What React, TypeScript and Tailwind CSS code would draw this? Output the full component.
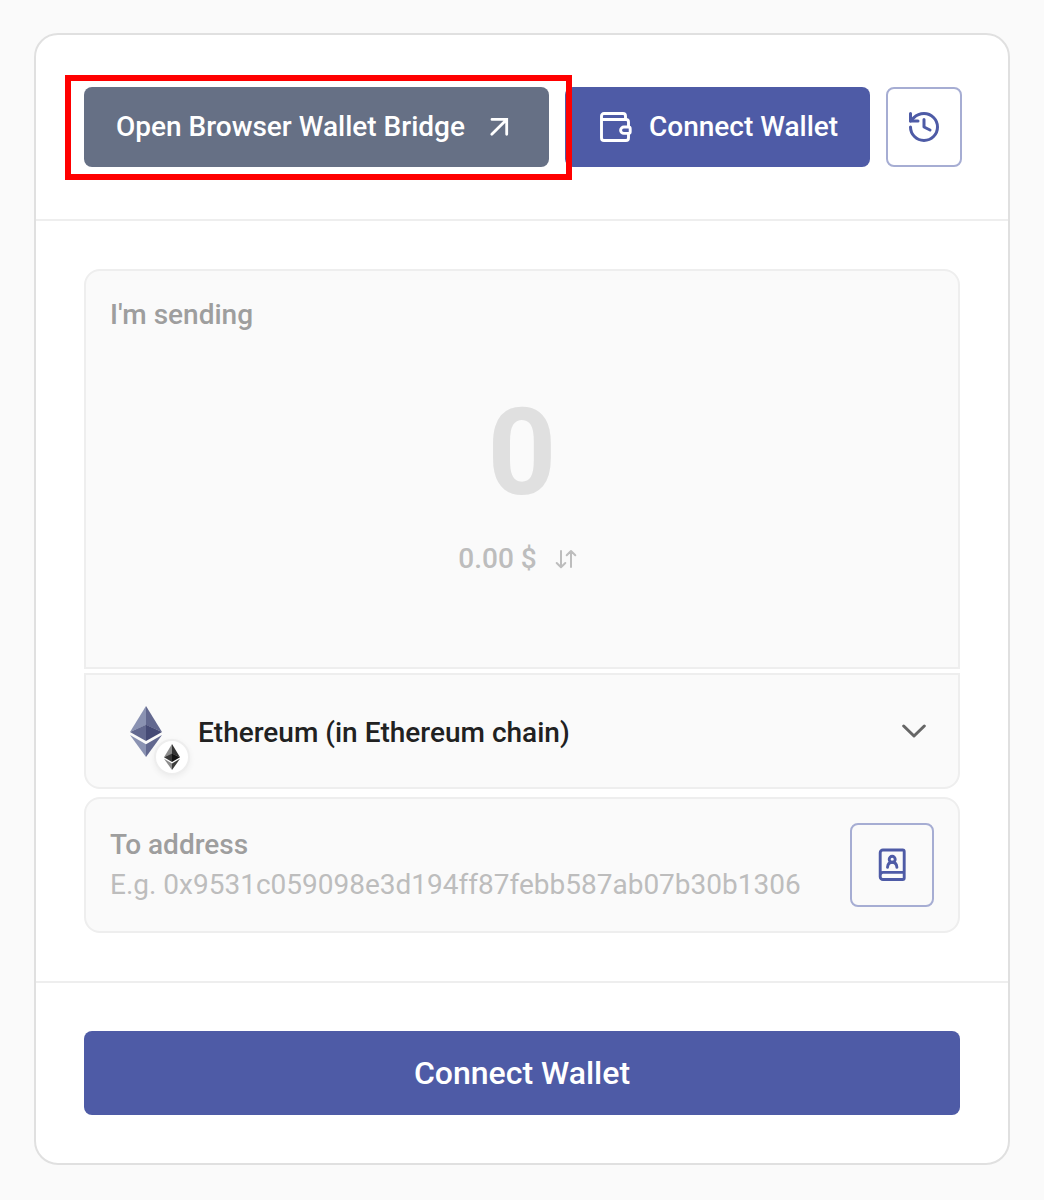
type EthColors = [string, string, string, string, string, string];

function EthLogo({ className, colors }: { className: string; colors: EthColors }) {
  const [topLeft, topRight, midLeft, midRight, lowLeft, lowRight] = colors;
  return (
    <svg className={className} viewBox="0 0 62 101" preserveAspectRatio="none">
      <path d="M31 0 0 51.5 31 37.5z" fill={topLeft} />
      <path d="M31 0 62 51.5 31 37.5z" fill={topRight} />
      <path d="M31 37.3 0 51.5 31 69.5z" fill={midLeft} />
      <path d="M31 37.3 62 51.5 31 69.5z" fill={midRight} />
      <path d="M0 57.5 31 75.8V101z" fill={lowLeft} />
      <path d="M62 57.5 31 75.8V101z" fill={lowRight} />
    </svg>
  );
}

const stroke = {
  fill: "none",
  stroke: "currentColor",
  strokeLinecap: "round",
  strokeLinejoin: "round",
} as const;

function ArrowIcon() {
  return (
    <svg className="ml-6 h-5 w-5 shrink-0" viewBox="0 0 20 20" {...stroke} strokeWidth="2.8" strokeLinejoin="miter">
      <path d="M3 2.400H17.700V17.300M17.700 2.400 2.800 17.300" />
    </svg>
  );
}

function WalletIcon() {
  return (
    <svg className="h-8 w-9 shrink-0" viewBox="0 0 36 32" {...stroke} strokeWidth="2.9">
      <path d="M26.500 8.500V5a2.500 2.500 0 0 0-2.500-2.500H5a2.500 2.500 0 0 0-2.500 2.500V27a2.500 2.500 0 0 0 2.500 2.500h22a2.500 2.500 0 0 0 2.500-2.500V22.500M2.500 8.500h24.500a2.500 2.500 0 0 1 2.500 2.500v4.500" />
      <path d="M24.800 16h4.700c1 0 1.700.7 1.700 1.700v3c0 1-.7 1.700-1.700 1.700h-4.700c-1.600 0-3.200-1.600-3.200-3.200s1.600-3.200 3.200-3.200z" />
    </svg>
  );
}

function HistoryIcon() {
  return (
    <svg className="h-9 w-9" viewBox="0 0 24 24" {...stroke} strokeWidth="2">
      <path d="M3 12a9 9 0 1 0 9-9 9.750 9.750 0 0 0-6.740 2.740L3 8" />
      <path d="M3 3v5h5M12 7v5l4 2" />
    </svg>
  );
}

function SwapIcon() {
  return (
    <svg className="ml-[18px] h-5 w-[22px]" viewBox="0 0 22 20" {...stroke} strokeWidth="2">
      <path d="M6 2v16M1.700 14 6 18.200 10.300 14M16 18V2M11.700 6.200 16 2 20.300 6.200" />
    </svg>
  );
}

function AddressBookIcon() {
  return (
    <svg className="h-9 w-7" viewBox="0 0 28 36" {...stroke} strokeWidth="2.9">
      <path d="M26.200 4.500a1.500 1.500 0 0 0-1.500-1.500H5a2.800 2.800 0 0 0-2.800 2.800V29.700a2.800 2.800 0 0 0 2.800 2.800H24.700a1.500 1.500 0 0 0 1.500-1.500zM2.200 28.600c0-2 1-3.200 2.800-3.200h21.200" />
      <circle cx="14.200" cy="12.300" r="3" />
      <path d="M9.500 20.300c.3-3 2-5 4.700-5s4.400 2 4.700 5" />
    </svg>
  );
}

export default function App() {
  return (
    <div className="h-[1200px] w-[1044px] bg-[#fafafa] pt-[33px] pl-[34px] font-['Roboto',sans-serif] text-[28px] leading-10 font-medium">
      <main className="h-[1132px] w-[976px] rounded-3xl border-2 border-[#e0e0e0] bg-white">
        <header className="relative flex h-[186px] items-center gap-4 border-b-2 border-[#eee] pl-12">
          <button className="flex h-20 w-[465px] items-center rounded-lg bg-[#667085] pl-8 whitespace-nowrap text-white">
            <span>Open Browser Wallet Bridge</span>
            <ArrowIcon />
          </button>
          <button className="flex h-20 w-[305px] items-center rounded-lg bg-[#4e5ba6] pl-[34px] whitespace-nowrap text-white">
            <WalletIcon />
            <span className="ml-[14px]">Connect Wallet</span>
          </button>
          <button className="flex h-20 w-[76px] items-center justify-center rounded-lg border-2 border-[#a6add3] text-[#4e5ba6]">
            <HistoryIcon />
          </button>
          <div className="pointer-events-none absolute top-10 left-[29px] h-[105px] w-[507px] border-6 border-[#ff0000]" />
        </header>

        <section className="flex h-[762px] flex-col border-b-2 border-[#eee] px-12 pt-12">
          <div className="h-[400px] w-[876px] rounded-t-2xl border-2 border-[#eee] bg-[#fafafa] px-6 pt-6">
            <div className="text-[#9e9e9e]">I'm sending</div>
            <div className="mt-12 text-center text-[120px] leading-[140px] font-bold text-[#e0e0e0]">0</div>
            <div className="mt-4 flex items-center justify-center pr-[9px] text-[#bdbdbd]">
              <span>0.00 $</span>
              <SwapIcon />
            </div>
          </div>

          <div className="mt-1 flex h-[116px] w-[876px] items-center rounded-b-2xl border-2 border-[#eee] bg-[#fafafa] pr-8 pl-11">
            <div className="relative h-[51px] w-8">
              <EthLogo className="h-[51px] w-8" colors={["#8a92b2", "#62688f", "#62688f", "#454a75", "#8a92b2", "#62688f"]} />
              <div className="absolute top-[33px] left-[24px] flex h-9 w-9 items-center justify-center rounded-full border-2 border-[#eee] bg-white shadow-[0_2px_6px_rgba(0,0,0,0.06)]">
                <EthLogo className="h-[26px] w-4" colors={["#8c8c8c", "#343434", "#393939", "#141414", "#8c8c8c", "#3c3c3b"]} />
              </div>
            </div>
            <span className="mt-1 ml-9 text-[#212121]">Ethereum (in Ethereum chain)</span>
            <svg className="ml-auto h-4 w-6 text-[#666]" viewBox="0 0 24 16" {...stroke} strokeWidth="3">
              <path d="M1.700 3 12 13 22.300 3" />
            </svg>
          </div>

          <div className="mt-2 flex h-[136px] w-[876px] items-center justify-between rounded-2xl border-2 border-[#eee] bg-[#fafafa] px-6">
            <div>
              <div className="text-[#9e9e9e]">To address</div>
              <div className="font-normal text-[#bdbdbd]">E.g. 0x9531c059098e3d194ff87febb587ab07b30b1306</div>
            </div>
            <button className="flex h-[84px] w-[84px] items-center justify-center rounded-lg border-2 border-[#a6add3] text-[#4e5ba6]">
              <AddressBookIcon />
            </button>
          </div>
        </section>

        <footer className="p-12">
          <button className="h-[84px] w-[876px] rounded-lg bg-[#4e5ba6] text-[32px] text-white">Connect Wallet</button>
        </footer>
      </main>
    </div>
  );
}
